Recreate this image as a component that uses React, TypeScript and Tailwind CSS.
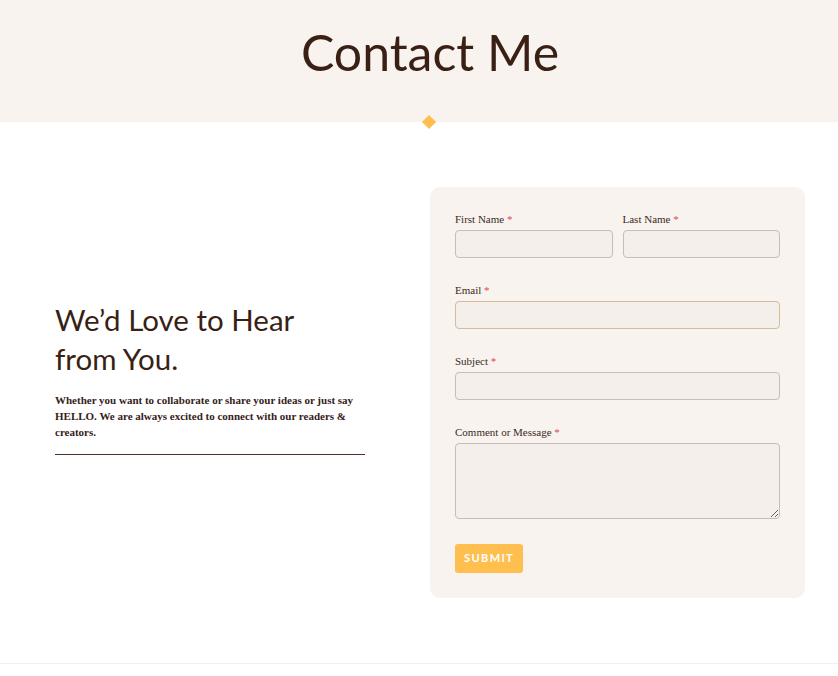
import React from 'react'

const heading = { fontFamily: 'Lato, "Noto Sans", sans-serif' }
const serif = { fontFamily: '"Liberation Serif", "DejaVu Serif", serif' }

function Field({ label, className = '', children }: { label: string; className?: string; children: React.ReactNode }) {
    return (
        <div className={className}>
            <label className="block text-[11px] leading-[16px] text-[#3b2a22] mb-[3px]" style={serif}>
                {label} <span className="text-[#e0474c]">*</span>
            </label>
            {children}
        </div>
    )
}

const inputCls = 'block w-full h-[28px] rounded-[4px] border bg-[#f4efeb] outline-none'

export default function App() {
    return (
        <div className="min-h-screen bg-white">
            <header className="relative h-[122px] bg-[#f8f3ef] flex items-center justify-center pl-[22px]">
                <h1 className="text-[50px] leading-none text-[#3a1f15] -mt-[18px]" style={heading}>
                    Contact Me
                </h1>
                {/* diamond marker */}
                <div className="absolute left-[424px] top-[117px] w-[10px] h-[10px] rotate-45 bg-[#ffbf4f]" />
            </header>

            <main className="flex pt-[65px] pb-[65px] border-b border-[#f0f0f0]">
                <div className="w-[310px] ml-[55px] pt-[113px]">
                    <h2 className="text-[29.5px] leading-[39px] text-[#3a1f15]" style={heading}>
                        We’d Love to Hear<br />from You.
                    </h2>
                    <p className="mt-[14px] text-[11px] leading-[16px] font-bold text-[#35221a]" style={serif}>
                        Whether you want to collaborate or share your ideas or just say HELLO. We are always excited to connect with our readers &amp; creators.
                    </p>
                    <div className="mt-[14px] h-px bg-[#4a3228]" />
                </div>

                <form className="ml-[65px] w-[375px] rounded-[10px] bg-[#f8f3ef] px-[25px] pt-[24px] pb-[25px]">
                    <div className="flex gap-[10px]">
                        <Field label="First Name" className="flex-1">
                            <input className={inputCls + ' border-[#c8bcb3]'} />
                        </Field>
                        <Field label="Last Name" className="flex-1">
                            <input className={inputCls + ' border-[#c8bcb3]'} />
                        </Field>
                    </div>
                    <Field label="Email" className="mt-[24px]">
                        <input className={inputCls + ' border-[#d6bc9a]'} />
                    </Field>
                    <Field label="Subject" className="mt-[24px]">
                        <input className={inputCls + ' border-[#c8bcb3]'} />
                    </Field>
                    <Field label="Comment or Message" className="mt-[24px]">
                        <textarea className="block w-full h-[76px] rounded-[4px] border border-[#c8bcb3] bg-[#f4efeb] outline-none" />
                    </Field>
                    <button
                        type="button"
                        className="mt-[25px] h-[29px] px-[9px] rounded-[3px] bg-[#ffbf4f] text-white text-[11px] font-bold tracking-[1.4px] uppercase"
                        style={heading}
                    >
                        Submit
                    </button>
                </form>
            </main>
        </div>
    )
}
